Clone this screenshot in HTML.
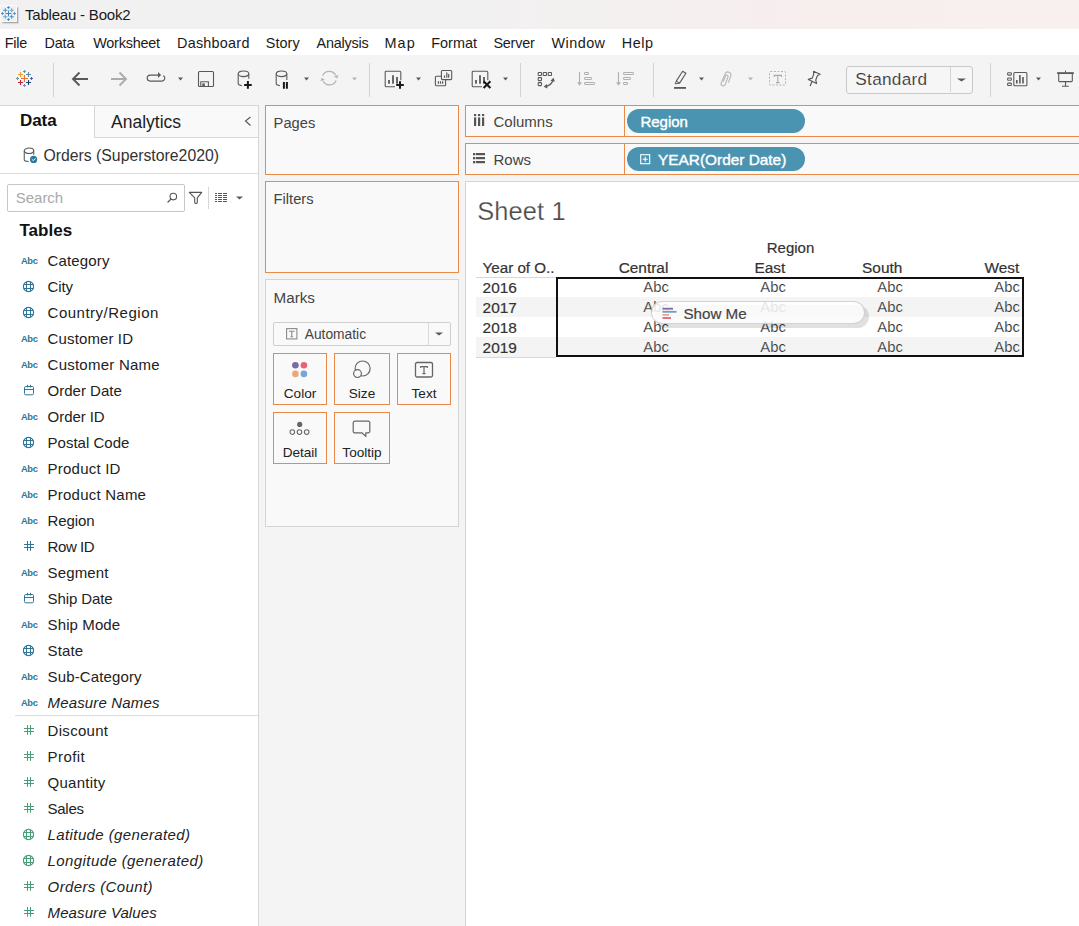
<!DOCTYPE html>
<html><head><meta charset="utf-8"><title>Tableau - Book2</title>
<style>
html,body{margin:0;padding:0;width:1079px;height:926px;overflow:hidden;background:#f4f4f4;}
body{position:relative;font-family:"Liberation Sans",sans-serif;}
.t{position:absolute;white-space:nowrap;line-height:1;}
svg{overflow:visible}
</style></head><body>
<div style="position:absolute;left:0px;top:0px;width:1079px;height:29px;background:linear-gradient(90deg,#f1f1f1 0%,#f2f1f1 45%,#f7eeee 75%,#f8efef 100%)"></div>
<div style="position:absolute;left:0px;top:5px;width:17px;height:17px;box-sizing:border-box;background:#f0f0f0;border:1px solid #fafafa;box-shadow:1.5px 1.5px 1.5px rgba(0,0,0,0.3)"></div>
<svg style="position:absolute;left:0px;top:5px;" width="17" height="17" viewBox="0 0 17 17"><path d="M5.6 8.5h5.8M8.5 5.6v5.8" stroke="#3f87c0" stroke-width="1.0"/><path d="M3.1999999999999997 5.3h4.2M5.3 3.1999999999999997v4.2" stroke="#4f93c6" stroke-width="1.0"/><path d="M9.6 5.3h4.2M11.7 3.1999999999999997v4.2" stroke="#6ea6d0" stroke-width="1.0"/><path d="M3.1999999999999997 11.7h4.2M5.3 9.6v4.2" stroke="#6ea6d0" stroke-width="1.0"/><path d="M9.6 11.7h4.2M11.7 9.6v4.2" stroke="#4f93c6" stroke-width="1.0"/><path d="M7.2 2.5h2.6M8.5 1.2v2.6" stroke="#3f87c0" stroke-width="1.1"/><path d="M7.2 14.5h2.6M8.5 13.2v2.6" stroke="#3f87c0" stroke-width="1.1"/><path d="M1.2 8.5h2.6M2.5 7.2v2.6" stroke="#3f87c0" stroke-width="1.1"/><path d="M13.2 8.5h2.6M14.5 7.2v2.6" stroke="#3f87c0" stroke-width="1.1"/></svg>
<div class="t" style="left:25.00px;top:6.80px;font-size:15px;color:#1a1a1a;font-weight:normal;font-style:normal;letter-spacing:-0.2px">Tableau - Book2</div>
<div style="position:absolute;left:0px;top:29px;width:1079px;height:26px;background:#ffffff"></div>
<div class="t" style="left:4.80px;top:35.81px;font-size:14.4px;color:#1a1a1a;font-weight:normal;font-style:normal;letter-spacing:-0.267px">File</div>
<div class="t" style="left:44.40px;top:35.81px;font-size:14.4px;color:#1a1a1a;font-weight:normal;font-style:normal;letter-spacing:-0.1px">Data</div>
<div class="t" style="left:93.20px;top:35.81px;font-size:14.4px;color:#1a1a1a;font-weight:normal;font-style:normal;letter-spacing:-0.2px">Worksheet</div>
<div class="t" style="left:177.00px;top:35.81px;font-size:14.4px;color:#1a1a1a;font-weight:normal;font-style:normal;letter-spacing:0.25px">Dashboard</div>
<div class="t" style="left:265.80px;top:35.81px;font-size:14.4px;color:#1a1a1a;font-weight:normal;font-style:normal;letter-spacing:0.05px">Story</div>
<div class="t" style="left:316.60px;top:35.81px;font-size:14.4px;color:#1a1a1a;font-weight:normal;font-style:normal;letter-spacing:-0.214px">Analysis</div>
<div class="t" style="left:384.40px;top:35.81px;font-size:14.4px;color:#1a1a1a;font-weight:normal;font-style:normal;letter-spacing:1.2px">Map</div>
<div class="t" style="left:431.20px;top:35.81px;font-size:14.4px;color:#1a1a1a;font-weight:normal;font-style:normal;letter-spacing:0.04px">Format</div>
<div class="t" style="left:493.40px;top:35.81px;font-size:14.4px;color:#1a1a1a;font-weight:normal;font-style:normal;letter-spacing:-0.2px">Server</div>
<div class="t" style="left:551.60px;top:35.81px;font-size:14.4px;color:#1a1a1a;font-weight:normal;font-style:normal;letter-spacing:0.44px">Window</div>
<div class="t" style="left:621.80px;top:35.81px;font-size:14.4px;color:#1a1a1a;font-weight:normal;font-style:normal;letter-spacing:0.533px">Help</div>
<div style="position:absolute;left:0px;top:55px;width:1079px;height:50px;background:#f4f4f4"></div>
<div style="position:absolute;left:53px;top:63px;width:1px;height:34px;background:#d2d2d2"></div>
<div style="position:absolute;left:369px;top:63px;width:1px;height:34px;background:#d2d2d2"></div>
<div style="position:absolute;left:520px;top:63px;width:1px;height:34px;background:#d2d2d2"></div>
<div style="position:absolute;left:653px;top:63px;width:1px;height:34px;background:#d2d2d2"></div>
<div style="position:absolute;left:990px;top:63px;width:1px;height:34px;background:#d2d2d2"></div>
<svg style="position:absolute;left:15px;top:69px;" width="19" height="19" viewBox="0 0 19 19"><path d="M6.0 9.5h7.0M9.5 6.0v7.0" stroke="#e8792a" stroke-width="1.1"/><path d="M3.0 5.5h5.0M5.5 3.0v5.0" stroke="#efa02e" stroke-width="1.1"/><path d="M11.0 5.5h5.0M13.5 3.0v5.0" stroke="#5b8c9f" stroke-width="1.1"/><path d="M3.0 13.5h5.0M5.5 11.0v5.0" stroke="#c8203a" stroke-width="1.1"/><path d="M11.0 13.5h5.0M13.5 11.0v5.0" stroke="#1e3f7c" stroke-width="1.1"/><path d="M8.0 2.5h3.0M9.5 1.0v3.0" stroke="#6a98a5" stroke-width="1.0"/><path d="M8.0 16.5h3.0M9.5 15.0v3.0" stroke="#7b8fb8" stroke-width="1.0"/><path d="M1.0 9.5h3.0M2.5 8.0v3.0" stroke="#6a98a5" stroke-width="1.0"/><path d="M15.0 9.5h3.0M16.5 8.0v3.0" stroke="#5c5f98" stroke-width="1.0"/></svg>
<svg style="position:absolute;left:71px;top:71px;" width="18" height="16" viewBox="0 0 18 16"><path d="M2 8h15M8.5 1.5L2 8l6.5 6.5" stroke="#595959" stroke-width="1.9" fill="none"/></svg>
<svg style="position:absolute;left:110px;top:71px;" width="18" height="16" viewBox="0 0 18 16"><path d="M1 8h15M9.5 1.5L16 8l-6.5 6.5" stroke="#ababab" stroke-width="1.9" fill="none"/></svg>
<svg style="position:absolute;left:146px;top:71px;" width="20" height="13" viewBox="0 0 20 13"><path d="M12.3 4.1H4.2a3 3 0 0 0 0 6h11.6a3 3 0 0 0 1.5-5.6" stroke="#595959" stroke-width="1.15" fill="none"/><path d="M12 1.1l3.1 3-3.1 3z" fill="#595959"/></svg>
<svg style="position:absolute;left:178.0px;top:77.3px;" width="5" height="4" viewBox="0 0 5 4"><path d="M0 0.5h5L2.5 3.5z" fill="#595959"/></svg>
<svg style="position:absolute;left:197px;top:70px;" width="18" height="18" viewBox="0 0 18 18"><rect x="1.5" y="1.5" width="15" height="15" rx="1" fill="none" stroke="#595959" stroke-width="1.1"/><path d="M3.8 16.5V11.8h7.6V16.5" fill="none" stroke="#595959" stroke-width="1.1"/><rect x="5.3" y="13.4" width="2.5" height="3.2" fill="#595959"/></svg>
<svg style="position:absolute;left:237px;top:70px;" width="17" height="20" viewBox="0 0 17 20"><ellipse cx="6.5" cy="3.8" rx="5.3" ry="2.8" fill="none" stroke="#595959" stroke-width="1.1"/><path d="M1.2 3.8v9.7q0 1.6 3.6 2.1M11.8 3.8v5.000000000000001" fill="none" stroke="#595959" stroke-width="1.1"/><path d="M7.1 15h7.6M10.9 11.1v7.7" stroke="#1a1a1a" stroke-width="2"/></svg>
<svg style="position:absolute;left:275px;top:70px;" width="17" height="20" viewBox="0 0 17 20"><ellipse cx="6.5" cy="3.8" rx="5.3" ry="2.8" fill="none" stroke="#595959" stroke-width="1.1"/><path d="M1.2 3.8v9.7q0 1.6 3.6 2.1M11.8 3.8v6.2" fill="none" stroke="#595959" stroke-width="1.1"/><path d="M8.9 12v6.8M11.9 12v6.8" stroke="#1a1a1a" stroke-width="2"/></svg>
<svg style="position:absolute;left:304.0px;top:77.3px;" width="5" height="4" viewBox="0 0 5 4"><path d="M0 0.5h5L2.5 3.5z" fill="#595959"/></svg>
<svg style="position:absolute;left:320px;top:70px;" width="20" height="17" viewBox="0 0 20 17"><path d="M2.63 5.64A7.2 7.2 0 0 1 15.6 5.1M16.17 10.56A7.2 7.2 0 0 1 3.2 11.1" fill="none" stroke="#b4b4b4" stroke-width="1.2"/><path d="M18.33 4.85L14.01 6.43 17.2 8.46z M0.47 11.35L4.79 9.77 1.6 7.74z" fill="#b4b4b4"/></svg>
<svg style="position:absolute;left:352.0px;top:77.3px;" width="5" height="4" viewBox="0 0 5 4"><path d="M0 0.5h5L2.5 3.5z" fill="#b4b4b4"/></svg>
<svg style="position:absolute;left:384px;top:70px;" width="21" height="20" viewBox="0 0 21 20"><path d="M11 16.8H2.2a1 1 0 0 1-1-1V2.2a1 1 0 0 1 1-1h13.6a1 1 0 0 1 1 1v8.1" fill="none" stroke="#595959" stroke-width="1.1"/><path d="M5 13.8v-3.8M9 13.8v-8.6M13 13.8v-6.8" stroke="#595959" stroke-width="1.8"/><path d="M12.2 14.9h7.6M16 11.2v7.6" stroke="#1a1a1a" stroke-width="2"/></svg>
<svg style="position:absolute;left:416.0px;top:77.3px;" width="5" height="4" viewBox="0 0 5 4"><path d="M0 0.5h5L2.5 3.5z" fill="#595959"/></svg>
<svg style="position:absolute;left:434px;top:69px;" width="19" height="18" viewBox="0 0 19 18"><rect x="7.4" y="1.5" width="10.3" height="9.1" rx="1" fill="none" stroke="#595959" stroke-width="1.1"/><path d="M10.5 8.7V6.4M12.8 8.7V3.4M14.7 8.7V4.9" stroke="#595959" stroke-width="1.2"/><path d="M7.4 7.2H2.4a1 1 0 0 0-1 1v7.5a1 1 0 0 0 1 1h8.2a1 1 0 0 0 1-1v-5.1" fill="none" stroke="#595959" stroke-width="1.1"/><path d="M4.4 14.8v-2.5M6.5 14.8v-2.5M8.6 14.8v-2.5" stroke="#595959" stroke-width="1.2"/></svg>
<svg style="position:absolute;left:471px;top:70px;" width="21" height="20" viewBox="0 0 21 20"><path d="M11 16.8H2.2a1 1 0 0 1-1-1V2.2a1 1 0 0 1 1-1h13.6a1 1 0 0 1 1 1v8.1" fill="none" stroke="#595959" stroke-width="1.1"/><path d="M5 13.8v-3.8M9 13.8v-8.6M13 13.8v-6.8" stroke="#595959" stroke-width="1.8"/><path d="M12.6 11.3l6.8 6.8M19.4 11.3l-6.8 6.8" stroke="#1a1a1a" stroke-width="2.1"/></svg>
<svg style="position:absolute;left:503.0px;top:77.3px;" width="5" height="4" viewBox="0 0 5 4"><path d="M0 0.5h5L2.5 3.5z" fill="#595959"/></svg>
<svg style="position:absolute;left:537px;top:71px;" width="20" height="19" viewBox="0 0 20 19"><rect x="1.2" y="1.5" width="3.3" height="3" rx="0.6" fill="none" stroke="#595959" stroke-width="1.05"/><rect x="6.2" y="1.5" width="3.3" height="3" rx="0.6" fill="none" stroke="#595959" stroke-width="1.05"/><rect x="11.2" y="1.5" width="3.3" height="3" rx="0.6" fill="none" stroke="#595959" stroke-width="1.05"/><rect x="1.2" y="6.6" width="3.3" height="3" rx="0.6" fill="none" stroke="#595959" stroke-width="1.05"/><rect x="1.2" y="11.6" width="3.3" height="3" rx="0.6" fill="none" stroke="#595959" stroke-width="1.05"/><path d="M8.5 15.5Q14.5 14.5 16 9" fill="none" stroke="#595959" stroke-width="1.2"/><path d="M6.6 15.85L10.53 17.53 9.77 12.99z M16.6 6.8L17.87 10.87 13.43 9.67z" fill="#595959"/></svg>
<svg style="position:absolute;left:576px;top:71px;" width="20" height="16" viewBox="0 0 20 16"><path d="M3.5 1.2V12" stroke="#b0b0b0" stroke-width="1.1"/><path d="M1.1 11.2h4.8L3.5 14.7z" fill="#b0b0b0"/><rect x="8.5" y="1.5" width="4" height="2" rx="0.4" fill="none" stroke="#b0b0b0" stroke-width="1"/><rect x="8.5" y="6.5" width="7" height="2" rx="0.4" fill="none" stroke="#b0b0b0" stroke-width="1"/><rect x="8.5" y="11.5" width="10" height="2" rx="0.4" fill="none" stroke="#b0b0b0" stroke-width="1"/></svg>
<svg style="position:absolute;left:615px;top:71px;" width="20" height="16" viewBox="0 0 20 16"><path d="M3.5 1.2V12" stroke="#b0b0b0" stroke-width="1.1"/><path d="M1.1 11.2h4.8L3.5 14.7z" fill="#b0b0b0"/><rect x="8.5" y="1.5" width="10" height="2" rx="0.4" fill="none" stroke="#b0b0b0" stroke-width="1"/><rect x="8.5" y="6.5" width="7" height="2" rx="0.4" fill="none" stroke="#b0b0b0" stroke-width="1"/><rect x="8.5" y="11.5" width="4" height="2" rx="0.4" fill="none" stroke="#b0b0b0" stroke-width="1"/></svg>
<svg style="position:absolute;left:673px;top:70px;" width="15" height="20" viewBox="0 0 15 20"><path d="M9.6 1.3L12.9 3.3 6.6 13.1 3.3 11.1Z" fill="none" stroke="#595959" stroke-width="1.1" stroke-linejoin="round"/><path d="M3.3 11.1L2.2 13.9 6.6 13.1" fill="none" stroke="#595959" stroke-width="1"/><rect x="1" y="17" width="12" height="1.8" fill="#595959"/></svg>
<svg style="position:absolute;left:698.5px;top:77.3px;" width="5" height="4" viewBox="0 0 5 4"><path d="M0 0.5h5L2.5 3.5z" fill="#595959"/></svg>
<svg style="position:absolute;left:719px;top:70px;" width="14" height="17" viewBox="0 0 14 17"><path d="M9.6 12.2L11.9 5.6A3 3 0 0 0 6.3 3.6L2.2 12.9A2.2 2.2 0 0 0 6.3 14.5L9.1 6.6A1.3 1.3 0 0 0 6.7 5.7L4.4 11.3" fill="none" stroke="#b4b4b4" stroke-width="1.05" stroke-linecap="round"/></svg>
<svg style="position:absolute;left:748.1px;top:77.3px;" width="5" height="4" viewBox="0 0 5 4"><path d="M0 0.5h5L2.5 3.5z" fill="#b4b4b4"/></svg>
<svg style="position:absolute;left:768px;top:70px;" width="19" height="17" viewBox="0 0 19 17"><rect x="1.5" y="1.5" width="16" height="13.5" rx="1" fill="none" stroke="#b4b4b4" stroke-width="1" stroke-dasharray="2 1.5"/><path d="M6.2 7V5.4h7.2V7M9.8 5.4v7.2M8 12.6h3.6" stroke="#a8a8a8" stroke-width="1.1" fill="none"/></svg>
<svg style="position:absolute;left:807px;top:70px;" width="15" height="17" viewBox="0 0 15 17"><path d="M6.6 1.3L13.1 4.3 10.5 5.5 8.7 10.2 9.6 13.4 1.3 9.4 5.2 8.1 6.6 4.6Z" fill="none" stroke="#595959" stroke-width="1.15" stroke-linejoin="round"/><path d="M5.2 11.3L3.3 15.6" stroke="#595959" stroke-width="1.2" stroke-linecap="round"/></svg>
<div style="position:absolute;left:846px;top:66px;width:127px;height:28px;box-sizing:border-box;border:1px solid #c9c9c9;border-radius:3px;background:#f6f6f6"></div>
<div style="position:absolute;left:950px;top:67px;width:1px;height:25px;background:#d4d4d4"></div>
<svg style="position:absolute;left:957.0px;top:78px;" width="9" height="4" viewBox="0 0 9 4"><path d="M0 0.5h9L4.5 3.5z" fill="#595959"/></svg>
<div class="t" style="left:855.30px;top:71.24px;font-size:17.2px;color:#333;font-weight:normal;font-style:normal;letter-spacing:0.3px;-webkit-text-stroke:0.15px #f6f6f6">Standard</div>
<svg style="position:absolute;left:1006px;top:71px;" width="22" height="16" viewBox="0 0 22 16"><rect x="1.6" y="1.7" width="3.8" height="2.4" rx="0.8" fill="none" stroke="#595959" stroke-width="1.05"/><rect x="1.6" y="6.9" width="3.8" height="2.4" rx="0.8" fill="none" stroke="#595959" stroke-width="1.05"/><rect x="1.6" y="12.1" width="3.8" height="2.4" rx="0.8" fill="none" stroke="#595959" stroke-width="1.05"/><rect x="7.8" y="1.5" width="13.1" height="13.3" rx="1" fill="none" stroke="#595959" stroke-width="1.1"/><path d="M10.8 12.6V9.1M13.9 12.6V4.1M17 12.6V6" stroke="#595959" stroke-width="1.6"/></svg>
<svg style="position:absolute;left:1036.1px;top:77.3px;" width="5" height="4" viewBox="0 0 5 4"><path d="M0 0.5h5L2.5 3.5z" fill="#595959"/></svg>
<svg style="position:absolute;left:1056px;top:70px;" width="20" height="18" viewBox="0 0 20 18"><path d="M9.5 0.6v1.8" stroke="#595959" stroke-width="1"/><rect x="1.1" y="2.2" width="16.7" height="1.8" fill="#595959"/><path d="M2.7 3.9V10.8a0.8 0.8 0 0 0 0.8 0.8H15.5a0.8 0.8 0 0 0 0.8-0.8V3.9M9.5 11.6v4.7M6 16.3h6.8" fill="none" stroke="#595959" stroke-width="1.1"/></svg>
<div style="position:absolute;left:0px;top:105px;width:259px;height:821px;background:#ffffff;box-sizing:border-box;border-top:1px solid #d6d6d6;border-right:1px solid #d6d6d6"></div>
<div style="position:absolute;left:94px;top:105px;width:165px;height:33px;box-sizing:border-box;background:#f9f9f9;border:1px solid #d6d6d6"></div>
<div class="t" style="left:19.90px;top:112.31px;font-size:17px;color:#111;font-weight:bold;font-style:normal;">Data</div>
<div class="t" style="left:111.00px;top:113.98px;font-size:17.5px;color:#1e1e1e;font-weight:normal;font-style:normal;">Analytics</div>
<svg style="position:absolute;left:244px;top:116px;" width="8" height="11" viewBox="0 0 8 11"><path d="M6.5 1L1.5 5l5 4.5" fill="none" stroke="#555" stroke-width="1.1"/></svg>
<svg style="position:absolute;left:23px;top:147px;" width="15" height="17" viewBox="0 0 15 17"><ellipse cx="6" cy="3.8" rx="4.75" ry="2.75" fill="none" stroke="#555" stroke-width="1.05"/><path d="M1.25 3.8V13q0 1.3 4.4 1.4M10.75 3.8V7.8" fill="none" stroke="#555" stroke-width="1.05"/><circle cx="10.6" cy="12.4" r="3.6" fill="#2f7899"/><path d="M8.8 12.3l1.5 1.3 2.3-2.3" fill="none" stroke="#fff" stroke-width="1"/></svg>
<div class="t" style="left:43.40px;top:147.62px;font-size:15.8px;color:#333;font-weight:normal;font-style:normal;">Orders (Superstore2020)</div>
<div style="position:absolute;left:0px;top:173px;width:258px;height:1px;background:#dcdcdc"></div>
<div style="position:absolute;left:7px;top:184px;width:178px;height:28px;box-sizing:border-box;border:1px solid #c6c6c6;border-radius:2px;background:#fff"></div>
<div class="t" style="left:15.70px;top:190.30px;font-size:15px;color:#a9a9a9;font-weight:normal;font-style:normal;">Search</div>
<svg style="position:absolute;left:166px;top:192px;" width="12" height="12" viewBox="0 0 12 12"><circle cx="7.3" cy="4.6" r="3.3" fill="none" stroke="#555" stroke-width="1.1"/><path d="M4.9 7.1L2 10" stroke="#555" stroke-width="1.3" stroke-linecap="round"/></svg>
<svg style="position:absolute;left:188px;top:191px;" width="15" height="14" viewBox="0 0 15 14"><path d="M1.3 1.4H13.7L9.3 6.8V11.2a1.3 1.3 0 0 1-2.6 0V6.8Z" fill="none" stroke="#555" stroke-width="1.1" stroke-linejoin="round"/></svg>
<div style="position:absolute;left:208px;top:187px;width:1px;height:22px;background:#d6d6d6"></div>
<svg style="position:absolute;left:214px;top:192px;" width="14" height="12" viewBox="0 0 14 12"><rect x="1" y="1" width="2" height="1" fill="#555"/><rect x="4" y="1" width="4" height="1" fill="#555"/><rect x="9" y="1" width="4" height="1" fill="#555"/><rect x="1" y="3" width="2" height="1" fill="#555"/><rect x="4" y="3" width="4" height="1" fill="#555"/><rect x="9" y="3" width="4" height="1" fill="#555"/><rect x="1" y="5" width="2" height="1" fill="#555"/><rect x="4" y="5" width="4" height="1" fill="#555"/><rect x="9" y="5" width="4" height="1" fill="#555"/><rect x="1" y="7" width="2" height="1" fill="#555"/><rect x="4" y="7" width="4" height="1" fill="#555"/><rect x="9" y="7" width="4" height="1" fill="#555"/><rect x="1" y="9" width="2" height="1" fill="#555"/><rect x="4" y="9" width="4" height="1" fill="#555"/><rect x="9" y="9" width="4" height="1" fill="#555"/></svg>
<svg style="position:absolute;left:235.7px;top:196px;" width="7" height="4" viewBox="0 0 7 4"><path d="M0 0.5h7L3.5 3.5z" fill="#595959"/></svg>
<div class="t" style="left:19.50px;top:222.31px;font-size:17px;color:#111;font-weight:bold;font-style:normal;">Tables</div>
<div class="t" style="left:21.00px;top:256.63px;font-size:9.3px;color:#2e7596;font-weight:bold;font-style:normal;letter-spacing:-0.35px">Abc</div>
<div class="t" style="left:47.60px;top:253.30px;font-size:15px;color:#222;font-weight:normal;font-style:normal;letter-spacing:0.143px">Category</div>
<svg style="position:absolute;left:22px;top:280px;" width="13" height="13" viewBox="0 0 13 13"><circle cx="6.5" cy="6.5" r="5.1" fill="none" stroke="#2e7596" stroke-width="1.1"/><path d="M4.5 1.8v9.4M8.5 1.8v9.4M1.6 4.5h9.8M1.6 8.5h9.8" stroke="#2e7596" stroke-width="1"/></svg>
<div class="t" style="left:47.60px;top:279.30px;font-size:15px;color:#222;font-weight:normal;font-style:normal;letter-spacing:-0.167px">City</div>
<svg style="position:absolute;left:22px;top:306px;" width="13" height="13" viewBox="0 0 13 13"><circle cx="6.5" cy="6.5" r="5.1" fill="none" stroke="#2e7596" stroke-width="1.1"/><path d="M4.5 1.8v9.4M8.5 1.8v9.4M1.6 4.5h9.8M1.6 8.5h9.8" stroke="#2e7596" stroke-width="1"/></svg>
<div class="t" style="left:47.60px;top:305.30px;font-size:15px;color:#222;font-weight:normal;font-style:normal;letter-spacing:0.5px">Country/Region</div>
<div class="t" style="left:21.00px;top:334.63px;font-size:9.3px;color:#2e7596;font-weight:bold;font-style:normal;letter-spacing:-0.35px">Abc</div>
<div class="t" style="left:47.60px;top:331.30px;font-size:15px;color:#222;font-weight:normal;font-style:normal;letter-spacing:0.12px">Customer ID</div>
<div class="t" style="left:21.00px;top:360.63px;font-size:9.3px;color:#2e7596;font-weight:bold;font-style:normal;letter-spacing:-0.35px">Abc</div>
<div class="t" style="left:47.60px;top:357.30px;font-size:15px;color:#222;font-weight:normal;font-style:normal;letter-spacing:0.233px">Customer Name</div>
<svg style="position:absolute;left:24px;top:384px;" width="11" height="12" viewBox="0 0 11 12"><rect x="0.5" y="2.5" width="9" height="8.3" rx="1.3" fill="none" stroke="#2e7596" stroke-width="1"/><path d="M0.5 5.5h9M3.5 0.8v2.7M6.5 0.8v2.7" stroke="#2e7596" stroke-width="1"/></svg>
<div class="t" style="left:47.60px;top:383.30px;font-size:15px;color:#222;font-weight:normal;font-style:normal;letter-spacing:0.0px">Order Date</div>
<div class="t" style="left:21.00px;top:412.63px;font-size:9.3px;color:#2e7596;font-weight:bold;font-style:normal;letter-spacing:-0.35px">Abc</div>
<div class="t" style="left:47.60px;top:409.30px;font-size:15px;color:#222;font-weight:normal;font-style:normal;letter-spacing:-0.057px">Order ID</div>
<svg style="position:absolute;left:22px;top:436px;" width="13" height="13" viewBox="0 0 13 13"><circle cx="6.5" cy="6.5" r="5.1" fill="none" stroke="#2e7596" stroke-width="1.1"/><path d="M4.5 1.8v9.4M8.5 1.8v9.4M1.6 4.5h9.8M1.6 8.5h9.8" stroke="#2e7596" stroke-width="1"/></svg>
<div class="t" style="left:47.60px;top:435.30px;font-size:15px;color:#222;font-weight:normal;font-style:normal;letter-spacing:0.0px">Postal Code</div>
<div class="t" style="left:21.00px;top:464.63px;font-size:9.3px;color:#2e7596;font-weight:bold;font-style:normal;letter-spacing:-0.35px">Abc</div>
<div class="t" style="left:47.60px;top:461.30px;font-size:15px;color:#222;font-weight:normal;font-style:normal;letter-spacing:0.222px">Product ID</div>
<div class="t" style="left:21.00px;top:490.63px;font-size:9.3px;color:#2e7596;font-weight:bold;font-style:normal;letter-spacing:-0.35px">Abc</div>
<div class="t" style="left:47.60px;top:487.30px;font-size:15px;color:#222;font-weight:normal;font-style:normal;letter-spacing:0.227px">Product Name</div>
<div class="t" style="left:21.00px;top:516.63px;font-size:9.3px;color:#2e7596;font-weight:bold;font-style:normal;letter-spacing:-0.35px">Abc</div>
<div class="t" style="left:47.60px;top:513.30px;font-size:15px;color:#222;font-weight:normal;font-style:normal;letter-spacing:-0.12px">Region</div>
<svg style="position:absolute;left:24px;top:540px;" width="11" height="12" viewBox="0 0 11 12"><path d="M3.5 1v9.8M6.5 1v9.8M0 4.5h10M0 7.5h10" stroke="#2e7596" stroke-width="1"/></svg>
<div class="t" style="left:47.60px;top:539.30px;font-size:15px;color:#222;font-weight:normal;font-style:normal;letter-spacing:-0.44px">Row ID</div>
<div class="t" style="left:21.00px;top:568.63px;font-size:9.3px;color:#2e7596;font-weight:bold;font-style:normal;letter-spacing:-0.35px">Abc</div>
<div class="t" style="left:47.60px;top:565.30px;font-size:15px;color:#222;font-weight:normal;font-style:normal;letter-spacing:0.117px">Segment</div>
<svg style="position:absolute;left:24px;top:592px;" width="11" height="12" viewBox="0 0 11 12"><rect x="0.5" y="2.5" width="9" height="8.3" rx="1.3" fill="none" stroke="#2e7596" stroke-width="1"/><path d="M0.5 5.5h9M3.5 0.8v2.7M6.5 0.8v2.7" stroke="#2e7596" stroke-width="1"/></svg>
<div class="t" style="left:47.60px;top:591.30px;font-size:15px;color:#222;font-weight:normal;font-style:normal;letter-spacing:-0.1px">Ship Date</div>
<div class="t" style="left:21.00px;top:620.63px;font-size:9.3px;color:#2e7596;font-weight:bold;font-style:normal;letter-spacing:-0.35px">Abc</div>
<div class="t" style="left:47.60px;top:617.30px;font-size:15px;color:#222;font-weight:normal;font-style:normal;letter-spacing:0.1px">Ship Mode</div>
<svg style="position:absolute;left:22px;top:644px;" width="13" height="13" viewBox="0 0 13 13"><circle cx="6.5" cy="6.5" r="5.1" fill="none" stroke="#2e7596" stroke-width="1.1"/><path d="M4.5 1.8v9.4M8.5 1.8v9.4M1.6 4.5h9.8M1.6 8.5h9.8" stroke="#2e7596" stroke-width="1"/></svg>
<div class="t" style="left:47.60px;top:643.30px;font-size:15px;color:#222;font-weight:normal;font-style:normal;letter-spacing:0.125px">State</div>
<div class="t" style="left:21.00px;top:672.63px;font-size:9.3px;color:#2e7596;font-weight:bold;font-style:normal;letter-spacing:-0.35px">Abc</div>
<div class="t" style="left:47.60px;top:669.30px;font-size:15px;color:#222;font-weight:normal;font-style:normal;letter-spacing:0.127px">Sub-Category</div>
<div class="t" style="left:21.00px;top:698.63px;font-size:9.3px;color:#2e7596;font-weight:bold;font-style:normal;letter-spacing:-0.35px">Abc</div>
<div class="t" style="left:47.60px;top:695.30px;font-size:15px;color:#222;font-weight:normal;font-style:italic;letter-spacing:0.15px">Measure Names</div>
<div style="position:absolute;left:15px;top:715px;width:243px;height:1px;background:#dcdcdc"></div>
<svg style="position:absolute;left:24px;top:724px;" width="11" height="12" viewBox="0 0 11 12"><path d="M3.5 1v9.8M6.5 1v9.8M0 4.5h10M0 7.5h10" stroke="#46a077" stroke-width="1"/></svg>
<div class="t" style="left:47.60px;top:723.30px;font-size:15px;color:#222;font-weight:normal;font-style:normal;letter-spacing:0.293px">Discount</div>
<svg style="position:absolute;left:24px;top:750px;" width="11" height="12" viewBox="0 0 11 12"><path d="M3.5 1v9.8M6.5 1v9.8M0 4.5h10M0 7.5h10" stroke="#46a077" stroke-width="1"/></svg>
<div class="t" style="left:47.60px;top:749.30px;font-size:15px;color:#222;font-weight:normal;font-style:normal;letter-spacing:0.422px">Profit</div>
<svg style="position:absolute;left:24px;top:776px;" width="11" height="12" viewBox="0 0 11 12"><path d="M3.5 1v9.8M6.5 1v9.8M0 4.5h10M0 7.5h10" stroke="#46a077" stroke-width="1"/></svg>
<div class="t" style="left:47.60px;top:775.30px;font-size:15px;color:#222;font-weight:normal;font-style:normal;letter-spacing:0.251px">Quantity</div>
<svg style="position:absolute;left:24px;top:802px;" width="11" height="12" viewBox="0 0 11 12"><path d="M3.5 1v9.8M6.5 1v9.8M0 4.5h10M0 7.5h10" stroke="#46a077" stroke-width="1"/></svg>
<div class="t" style="left:47.60px;top:801.30px;font-size:15px;color:#222;font-weight:normal;font-style:normal;letter-spacing:-0.29px">Sales</div>
<svg style="position:absolute;left:22px;top:828px;" width="13" height="13" viewBox="0 0 13 13"><circle cx="6.5" cy="6.5" r="5.1" fill="none" stroke="#46a077" stroke-width="1.1"/><path d="M4.5 1.8v9.4M8.5 1.8v9.4M1.6 4.5h9.8M1.6 8.5h9.8" stroke="#46a077" stroke-width="1"/></svg>
<div class="t" style="left:47.60px;top:827.30px;font-size:15px;color:#222;font-weight:normal;font-style:italic;letter-spacing:0.388px">Latitude (generated)</div>
<svg style="position:absolute;left:22px;top:854px;" width="13" height="13" viewBox="0 0 13 13"><circle cx="6.5" cy="6.5" r="5.1" fill="none" stroke="#46a077" stroke-width="1.1"/><path d="M4.5 1.8v9.4M8.5 1.8v9.4M1.6 4.5h9.8M1.6 8.5h9.8" stroke="#46a077" stroke-width="1"/></svg>
<div class="t" style="left:47.60px;top:853.30px;font-size:15px;color:#222;font-weight:normal;font-style:italic;letter-spacing:0.406px">Longitude (generated)</div>
<svg style="position:absolute;left:24px;top:880px;" width="11" height="12" viewBox="0 0 11 12"><path d="M3.5 1v9.8M6.5 1v9.8M0 4.5h10M0 7.5h10" stroke="#46a077" stroke-width="1"/></svg>
<div class="t" style="left:47.60px;top:879.30px;font-size:15px;color:#222;font-weight:normal;font-style:italic;letter-spacing:0.378px">Orders (Count)</div>
<svg style="position:absolute;left:24px;top:906px;" width="11" height="12" viewBox="0 0 11 12"><path d="M3.5 1v9.8M6.5 1v9.8M0 4.5h10M0 7.5h10" stroke="#46a077" stroke-width="1"/></svg>
<div class="t" style="left:47.60px;top:905.30px;font-size:15px;color:#222;font-weight:normal;font-style:italic;letter-spacing:0.095px">Measure Values</div>
<div style="position:absolute;left:259px;top:105px;width:206px;height:821px;background:#f4f4f4"></div>
<div style="position:absolute;left:265px;top:105px;width:194px;height:70px;box-sizing:border-box;border:1px solid #e98a48;background:#f9f9f9"></div>
<div class="t" style="left:273.60px;top:116.35px;font-size:14.7px;color:#444;font-weight:normal;font-style:normal;">Pages</div>
<div style="position:absolute;left:265px;top:181px;width:194px;height:92px;box-sizing:border-box;border:1px solid #e98a48;background:#f9f9f9"></div>
<div class="t" style="left:273.60px;top:192.05px;font-size:14.7px;color:#444;font-weight:normal;font-style:normal;">Filters</div>
<div style="position:absolute;left:265px;top:279px;width:194px;height:248px;box-sizing:border-box;border:1px solid #d4d4d4;background:#f9f9f9"></div>
<div class="t" style="left:273.60px;top:290.13px;font-size:15.2px;color:#444;font-weight:normal;font-style:normal;">Marks</div>
<div style="position:absolute;left:273px;top:322px;width:178px;height:24px;box-sizing:border-box;border:1px solid #cfcfcf;border-radius:2px;background:#f9f9f9"></div>
<div style="position:absolute;left:428px;top:323px;width:1px;height:22px;background:#dadada"></div>
<svg style="position:absolute;left:435.4px;top:332px;" width="8" height="4" viewBox="0 0 8 4"><path d="M0 0.5h8L4.0 3.5z" fill="#595959"/></svg>
<svg style="position:absolute;left:286px;top:328px;" width="12" height="12" viewBox="0 0 12 12"><rect x="0.6" y="0.6" width="10.3" height="10.3" fill="none" stroke="#8a8a8a" stroke-width="1.1"/><path d="M3 3.2h5.5M5.75 3.2v5.5M4.5 8.7h2.5" stroke="#8a8a8a" stroke-width="1.1" fill="none"/></svg>
<div class="t" style="left:304.70px;top:328.32px;font-size:13.8px;color:#444;font-weight:normal;font-style:normal;">Automatic</div>
<div style="position:absolute;left:273px;top:353px;width:54px;height:52px;box-sizing:border-box;border:1px solid #e98a48;background:#f9f9f9"></div>
<div class="t" style="left:300.00px;top:387.48px;font-size:13.6px;color:#222;font-weight:normal;font-style:normal;width:0;display:flex;justify-content:center">Color</div>
<div style="position:absolute;left:334px;top:353px;width:56px;height:52px;box-sizing:border-box;border:1px solid #e98a48;background:#f9f9f9"></div>
<div class="t" style="left:362.00px;top:387.48px;font-size:13.6px;color:#222;font-weight:normal;font-style:normal;width:0;display:flex;justify-content:center">Size</div>
<div style="position:absolute;left:397px;top:353px;width:54px;height:52px;box-sizing:border-box;border:1px solid #e98a48;background:#f9f9f9"></div>
<div class="t" style="left:424.00px;top:387.48px;font-size:13.6px;color:#222;font-weight:normal;font-style:normal;width:0;display:flex;justify-content:center">Text</div>
<div style="position:absolute;left:273px;top:412px;width:54px;height:52px;box-sizing:border-box;border:1px solid #e98a48;background:#f9f9f9"></div>
<div class="t" style="left:300.00px;top:446.48px;font-size:13.6px;color:#222;font-weight:normal;font-style:normal;width:0;display:flex;justify-content:center">Detail</div>
<div style="position:absolute;left:334px;top:412px;width:56px;height:52px;box-sizing:border-box;border:1px solid #e98a48;background:#f9f9f9"></div>
<div class="t" style="left:362.00px;top:446.48px;font-size:13.6px;color:#222;font-weight:normal;font-style:normal;width:0;display:flex;justify-content:center">Tooltip</div>
<svg style="position:absolute;left:290px;top:359px;" width="20" height="20" viewBox="0 0 20 20"><circle cx="5.4" cy="6.2" r="3.3" fill="#7b6aa0"/><circle cx="13.9" cy="6.2" r="3.3" fill="#e86276"/><circle cx="5.4" cy="14.9" r="3.3" fill="#eca77e"/><circle cx="13.9" cy="14.9" r="3.3" fill="#7aa6d1"/></svg>
<svg style="position:absolute;left:350px;top:358px;" width="24" height="22" viewBox="0 0 24 22"><circle cx="12.6" cy="10.5" r="7.5" fill="none" stroke="#666" stroke-width="1.2"/><circle cx="7.5" cy="15.6" r="3.9" fill="#f9f9f9" stroke="#666" stroke-width="1.2"/></svg>
<svg style="position:absolute;left:413px;top:361px;" width="21" height="18" viewBox="0 0 21 18"><rect x="2.5" y="1.5" width="17" height="14.5" rx="1.5" fill="none" stroke="#666" stroke-width="1.3"/><path d="M7.7 7V5.6h6.6V7M11 5.6v7M9.5 12.6h3" stroke="#666" stroke-width="1.2" fill="none"/></svg>
<svg style="position:absolute;left:288px;top:418px;" width="22" height="18" viewBox="0 0 22 18"><circle cx="11.7" cy="6.4" r="2.6" fill="#666"/><circle cx="4.3" cy="14.1" r="2.3" fill="none" stroke="#666" stroke-width="1.05"/><circle cx="11.5" cy="14.1" r="2.3" fill="none" stroke="#666" stroke-width="1.05"/><circle cx="18.7" cy="14.1" r="2.3" fill="none" stroke="#666" stroke-width="1.05"/></svg>
<svg style="position:absolute;left:352px;top:420px;" width="20" height="18" viewBox="0 0 20 18"><path d="M2.8 1.2h13.4a1.6 1.6 0 0 1 1.6 1.6v8.4a1.6 1.6 0 0 1-1.6 1.6h-2.4v3.6l-4-3.6H2.8a1.6 1.6 0 0 1-1.6-1.6V2.8a1.6 1.6 0 0 1 1.6-1.6z" fill="none" stroke="#666" stroke-width="1.2" stroke-linejoin="round"/></svg>
<div style="position:absolute;left:465px;top:105px;width:614px;height:32px;box-sizing:border-box;border:1px solid #e98a48;border-right:none;background:#f9f9f9"></div>
<div style="position:absolute;left:624px;top:105px;width:1px;height:32px;background:#e98a48"></div>
<div class="t" style="left:493.50px;top:114.30px;font-size:15px;color:#444;font-weight:normal;font-style:normal;">Columns</div>

<svg style="position:absolute;left:473px;top:113px;" width="13" height="14" viewBox="0 0 13 14"><rect x="1" y="1" width="2.2" height="2.1" fill="#555"/><rect x="1" y="4.4" width="2.2" height="8.6" fill="#555"/><rect x="5" y="1" width="2.2" height="2.1" fill="#555"/><rect x="5" y="4.4" width="2.2" height="8.6" fill="#555"/><rect x="9" y="1" width="2.2" height="2.1" fill="#555"/><rect x="9" y="4.4" width="2.2" height="8.6" fill="#555"/></svg>
<div style="position:absolute;left:465px;top:143px;width:614px;height:32px;box-sizing:border-box;border:1px solid #e98a48;border-right:none;background:#f9f9f9"></div>
<div style="position:absolute;left:624px;top:143px;width:1px;height:32px;background:#e98a48"></div>
<div class="t" style="left:493.50px;top:152.30px;font-size:15px;color:#444;font-weight:normal;font-style:normal;">Rows</div>

<svg style="position:absolute;left:472px;top:152px;" width="14" height="12" viewBox="0 0 14 12"><rect x="1" y="1" width="2.3" height="2.3" fill="#555"/><rect x="4" y="1" width="9" height="2.2" fill="#555"/><rect x="1" y="5" width="2.3" height="2.3" fill="#555"/><rect x="4" y="5" width="9" height="2.2" fill="#555"/><rect x="1" y="9" width="2.3" height="2.3" fill="#555"/><rect x="4" y="9" width="9" height="2.2" fill="#555"/></svg>
<div style="position:absolute;left:627px;top:109px;width:178px;height:24px;border-radius:12px;background:#4a94b2"></div>
<div class="t" style="left:640.40px;top:114.20px;font-size:15px;color:#fff;font-weight:normal;font-style:normal;-webkit-text-stroke:0.4px #fff">Region</div>
<div style="position:absolute;left:627px;top:147px;width:178px;height:24px;border-radius:12px;background:#4a94b2"></div>
<svg style="position:absolute;left:640px;top:154px;" width="11" height="11" viewBox="0 0 11 11"><rect x="0.7" y="0.7" width="9" height="9" fill="none" stroke="#fff" stroke-width="1.1"/><path d="M2.7 5.2h5M5.2 2.7v5" stroke="#fff" stroke-width="1.1"/></svg>
<div class="t" style="left:658.00px;top:151.66px;font-size:15.4px;color:#fff;font-weight:normal;font-style:normal;-webkit-text-stroke:0.4px #fff">YEAR(Order Date)</div>
<div style="position:absolute;left:465px;top:181px;width:614px;height:745px;box-sizing:border-box;background:#fff;border-top:1px solid #d4d4d4;border-left:1px solid #d4d4d4"></div>
<div class="t" style="left:477.20px;top:198.79px;font-size:25.4px;color:#4a4a4a;font-weight:normal;font-style:normal;letter-spacing:0.15px;-webkit-text-stroke:0.25px #fff">Sheet 1</div>
<div class="t" style="left:790.50px;top:240.30px;font-size:15px;color:#333;font-weight:normal;font-style:normal;width:0;display:flex;justify-content:center;-webkit-text-stroke:0.2px #333">Region</div>
<div class="t" style="left:482.50px;top:259.83px;font-size:15.2px;color:#333;font-weight:normal;font-style:normal;-webkit-text-stroke:0.2px #333">Year of O..</div>
<div class="t" style="right:410.70px;top:259.66px;font-size:15.4px;color:#333;font-weight:normal;font-style:normal;-webkit-text-stroke:0.2px #333">Central</div>
<div class="t" style="right:293.70px;top:259.66px;font-size:15.4px;color:#333;font-weight:normal;font-style:normal;-webkit-text-stroke:0.2px #333">East</div>
<div class="t" style="right:176.70px;top:259.66px;font-size:15.4px;color:#333;font-weight:normal;font-style:normal;-webkit-text-stroke:0.2px #333">South</div>
<div class="t" style="right:59.80px;top:259.66px;font-size:15.4px;color:#333;font-weight:normal;font-style:normal;-webkit-text-stroke:0.2px #333">West</div>
<div style="position:absolute;left:476px;top:277px;width:80px;height:1px;background:#d8d8d8"></div>
<div style="position:absolute;left:476px;top:357px;width:80px;height:1px;background:#d8d8d8"></div>
<div style="position:absolute;left:476px;top:297px;width:546px;height:20px;background:#f4f4f4"></div>
<div style="position:absolute;left:476px;top:337px;width:546px;height:20px;background:#f4f4f4"></div>
<div class="t" style="left:482.60px;top:279.66px;font-size:15.4px;color:#333;font-weight:normal;font-style:normal;-webkit-text-stroke:0.2px #333">2016</div>
<div class="t" style="right:410.20px;top:280.07px;font-size:14.8px;color:#333;font-weight:normal;font-style:normal;-webkit-text-stroke:0.15px #fff">Abc</div>
<div class="t" style="right:293.20px;top:280.07px;font-size:14.8px;color:#333;font-weight:normal;font-style:normal;-webkit-text-stroke:0.15px #fff">Abc</div>
<div class="t" style="right:176.20px;top:280.07px;font-size:14.8px;color:#333;font-weight:normal;font-style:normal;-webkit-text-stroke:0.15px #fff">Abc</div>
<div class="t" style="right:59.20px;top:280.07px;font-size:14.8px;color:#333;font-weight:normal;font-style:normal;-webkit-text-stroke:0.15px #fff">Abc</div>
<div class="t" style="left:482.60px;top:299.66px;font-size:15.4px;color:#333;font-weight:normal;font-style:normal;-webkit-text-stroke:0.2px #333">2017</div>
<div class="t" style="right:410.20px;top:300.07px;font-size:14.8px;color:#333;font-weight:normal;font-style:normal;-webkit-text-stroke:0.15px #fff">Abc</div>
<div class="t" style="right:293.20px;top:300.07px;font-size:14.8px;color:#333;font-weight:normal;font-style:normal;-webkit-text-stroke:0.15px #fff">Abc</div>
<div class="t" style="right:176.20px;top:300.07px;font-size:14.8px;color:#333;font-weight:normal;font-style:normal;-webkit-text-stroke:0.15px #fff">Abc</div>
<div class="t" style="right:59.20px;top:300.07px;font-size:14.8px;color:#333;font-weight:normal;font-style:normal;-webkit-text-stroke:0.15px #fff">Abc</div>
<div class="t" style="left:482.60px;top:319.66px;font-size:15.4px;color:#333;font-weight:normal;font-style:normal;-webkit-text-stroke:0.2px #333">2018</div>
<div class="t" style="right:410.20px;top:320.07px;font-size:14.8px;color:#333;font-weight:normal;font-style:normal;-webkit-text-stroke:0.15px #fff">Abc</div>
<div class="t" style="right:293.20px;top:320.07px;font-size:14.8px;color:#333;font-weight:normal;font-style:normal;-webkit-text-stroke:0.15px #fff">Abc</div>
<div class="t" style="right:176.20px;top:320.07px;font-size:14.8px;color:#333;font-weight:normal;font-style:normal;-webkit-text-stroke:0.15px #fff">Abc</div>
<div class="t" style="right:59.20px;top:320.07px;font-size:14.8px;color:#333;font-weight:normal;font-style:normal;-webkit-text-stroke:0.15px #fff">Abc</div>
<div class="t" style="left:482.60px;top:339.66px;font-size:15.4px;color:#333;font-weight:normal;font-style:normal;-webkit-text-stroke:0.2px #333">2019</div>
<div class="t" style="right:410.20px;top:340.07px;font-size:14.8px;color:#333;font-weight:normal;font-style:normal;-webkit-text-stroke:0.15px #fff">Abc</div>
<div class="t" style="right:293.20px;top:340.07px;font-size:14.8px;color:#333;font-weight:normal;font-style:normal;-webkit-text-stroke:0.15px #fff">Abc</div>
<div class="t" style="right:176.20px;top:340.07px;font-size:14.8px;color:#333;font-weight:normal;font-style:normal;-webkit-text-stroke:0.15px #fff">Abc</div>
<div class="t" style="right:59.20px;top:340.07px;font-size:14.8px;color:#333;font-weight:normal;font-style:normal;-webkit-text-stroke:0.15px #fff">Abc</div>
<div style="position:absolute;left:556px;top:277px;width:468px;height:80px;box-sizing:border-box;border:2px solid #111"></div>
<div style="position:absolute;left:655px;top:305px;width:214px;height:23px;border-radius:11.5px;background:rgba(0,0,0,0.12);filter:blur(0.6px)"></div>
<div style="position:absolute;left:651px;top:301px;width:214px;height:23px;box-sizing:border-box;border-radius:11.5px;background:rgba(255,255,255,0.86);border:1px solid rgba(200,200,200,0.8)"></div>
<svg style="position:absolute;left:662px;top:307px;" width="16" height="13" viewBox="0 0 16 13"><rect x="0.5" y="0.8" width="10.5" height="1.8" fill="#806b9e"/><rect x="0.5" y="3.9" width="14" height="1.8" fill="#6a9ecf"/><rect x="0.5" y="7" width="6.5" height="1.8" fill="#eca77e"/><rect x="0.5" y="10.1" width="8.5" height="1.8" fill="#e86276"/></svg>
<div class="t" style="left:683.40px;top:305.93px;font-size:15.2px;color:#444;font-weight:normal;font-style:normal;-webkit-text-stroke:0.2px #444">Show Me</div>
</body></html>
